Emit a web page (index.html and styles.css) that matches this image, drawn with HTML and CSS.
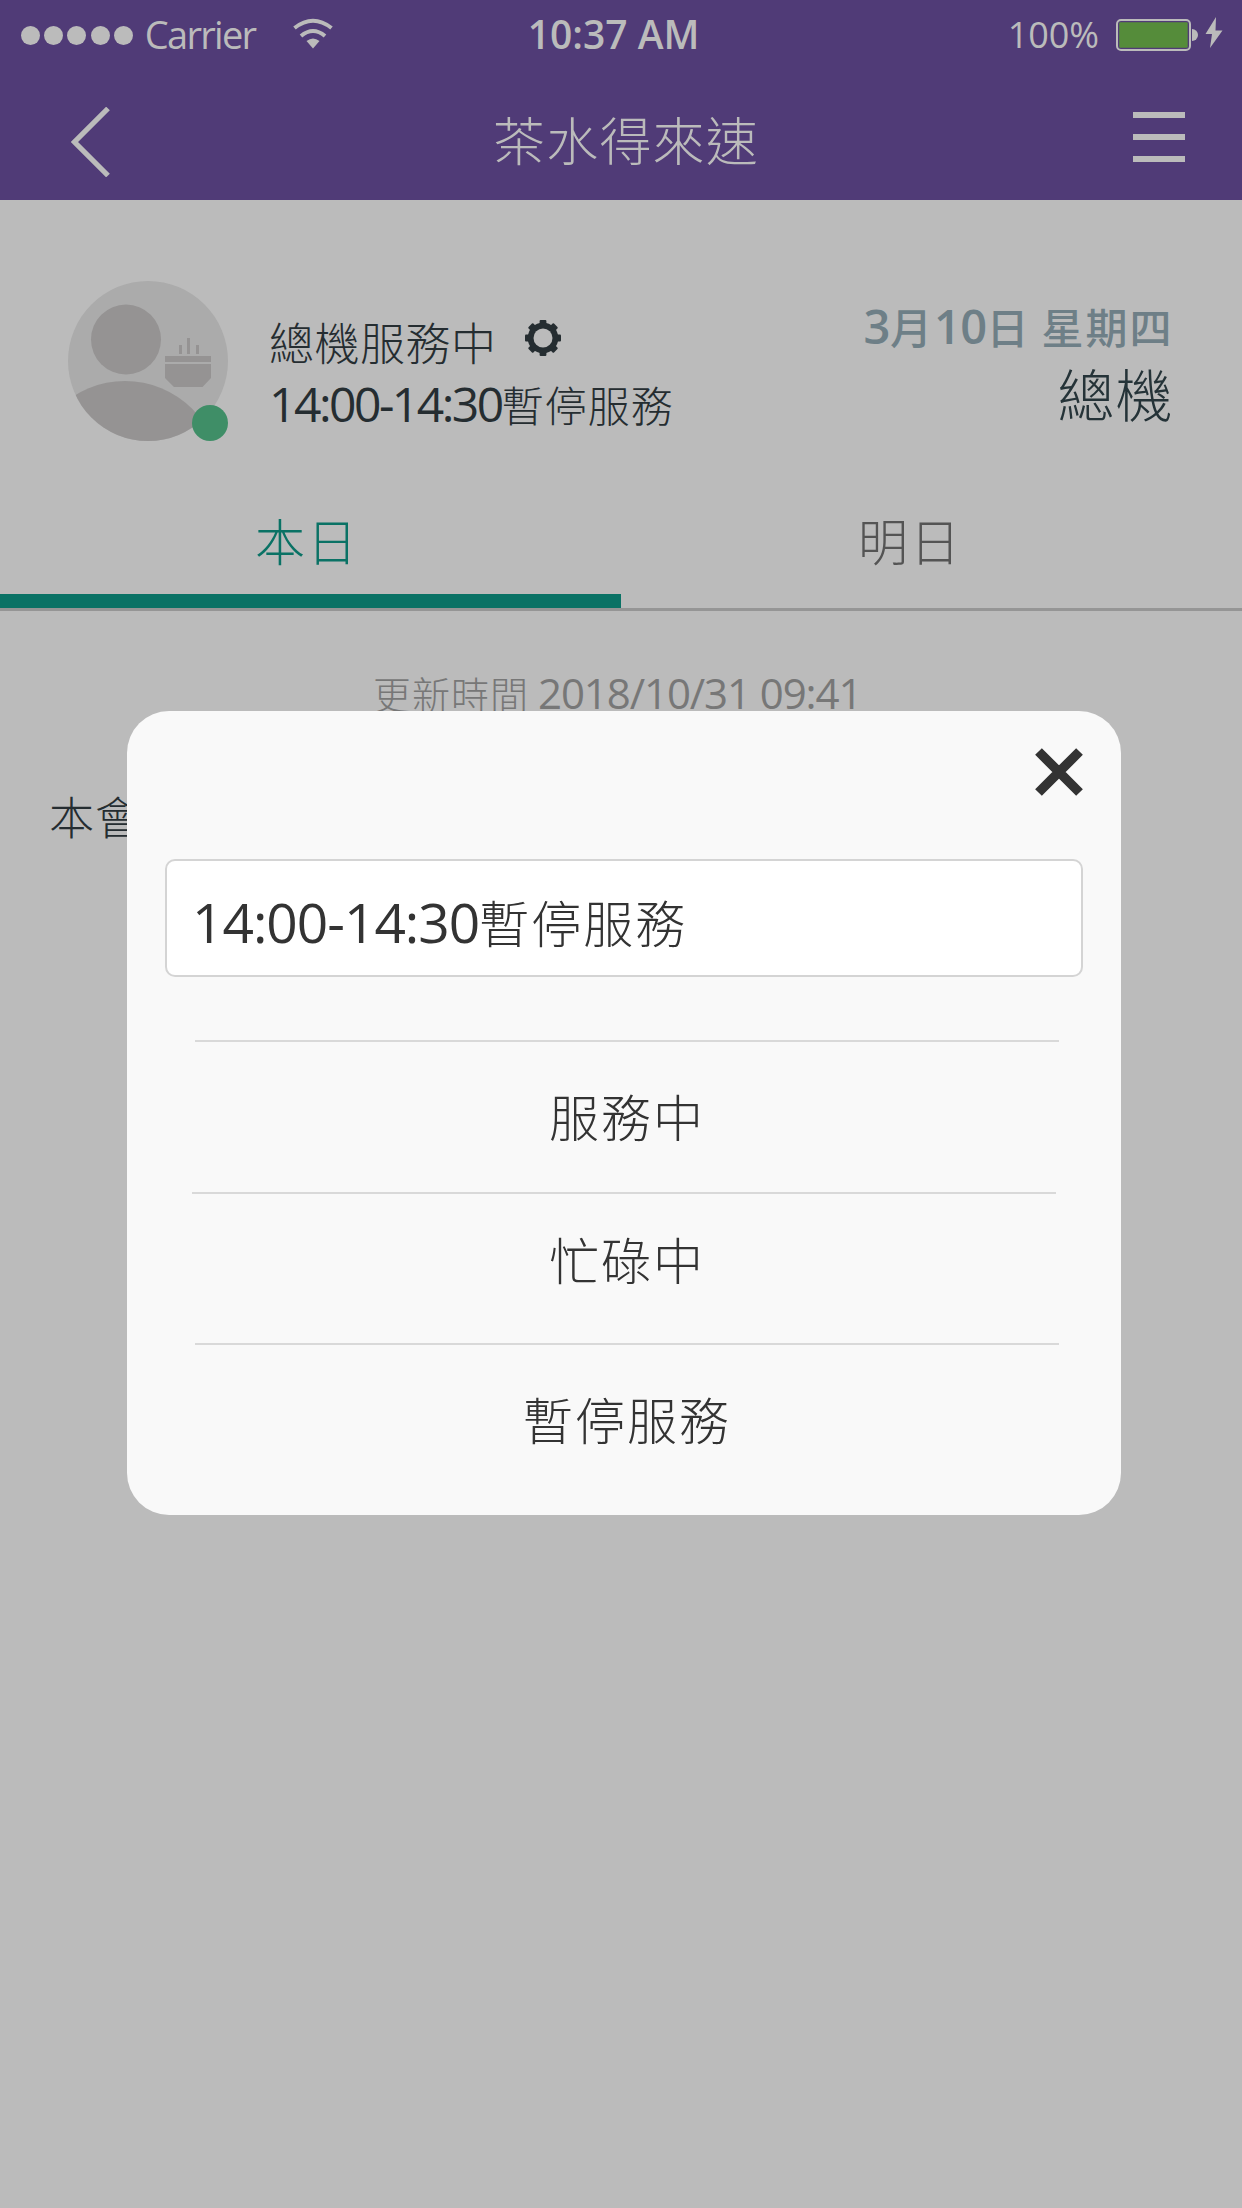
FILE: index.html
```html
<!DOCTYPE html>
<html lang="zh-Hant">
<head>
<meta charset="utf-8">
<title>茶水得來速</title>
<link rel="stylesheet" href="styles.css">
</head>
<body>
<div class="screen">
  <header class="header">
    <div class="status">
      <div class="signal"><i></i><i></i><i></i><i></i><i></i></div>
      <span class="carrier">Carrier</span>
      <svg class="wifi" width="40" height="32" viewBox="0 0 40 32"><g fill="none" stroke="#bbb" stroke-width="4"><path d="M1.500 10Q20-4.500 38.500 10"/><path d="M8 18Q20 8 32 18"/></g><path d="M13.500 23Q20 18 26.500 23L20 30.500Z" fill="#bbb"/></svg>
      <span class="time">10:37 AM</span>
      <span class="percent">100%</span>
      <svg class="battery" width="108" height="34" viewBox="0 0 108 34"><rect x="1" y="3" width="73" height="30" rx="4" fill="none" stroke="#bbb" stroke-width="2"/><rect x="3.200" y="5.300" width="68.500" height="25.500" rx="1" fill="#558c3a"/><path d="M76 12a6 6 0 0 1 0 12Z" fill="#bbb"/><path d="M100 0L89.500 17H96L94 31L106.500 13.500H99.500Z" fill="#bbb"/></svg>
    </div>
    <nav class="nav">
      <svg class="back" width="40" height="70" viewBox="0 0 40 70"><path d="M37 1.500L3.500 35L37 68.500" fill="none" stroke="#bbb" stroke-width="5.200"/></svg>
      <h1 class="title">茶水得來速</h1>
      <div class="menu"><i></i><i></i><i></i></div>
    </nav>
  </header>

  <section class="profile">
    <svg class="avatar" width="160" height="160" viewBox="0 0 160 160">
      <defs><clipPath id="face"><circle cx="80" cy="80" r="80"/></clipPath></defs>
      <circle cx="80" cy="80" r="80" fill="#ababab"/>
      <g fill="#959393">
        <circle cx="58" cy="58.500" r="35"/>
        <circle cx="57" cy="195" r="95" clip-path="url(#face)"/>
        <path d="M97 75h46v6H97zM97 83h46v14l-8.500 9H106l-9-9zM111 64h3v9h-3zM119 57h3v16h-3zM128 64h3v9h-3z"/>
      </g>
      <circle cx="142" cy="142" r="18" fill="#3f8e67"/>
    </svg>
    <div class="who">
      <div class="state">總機服務中
        <svg class="gear" width="36" height="36" viewBox="-18 -18 36 36"><g fill="#252d31"><g id="teeth"><rect x="-3.400" y="-18" width="6.800" height="36" rx="1"/><rect x="-18" y="-3.400" width="36" height="6.800" rx="1"/></g><use href="#teeth" transform="rotate(45)"/><circle r="15.300"/></g><circle r="9.500" fill="#bbb"/></svg>
      </div>
      <div class="note"><span class="num">14:00-14:30</span>暫停服務</div>
    </div>
    <div class="today">
      <div class="date"><span class="num">3</span>月<span class="num">10</span>日<span class="gap"></span>星期四</div>
      <div class="role">總機</div>
    </div>
  </section>

  <div class="tabs">
    <div class="tab active">本日</div>
    <div class="tab">明日</div>
  </div>

  <main class="content">
    <p class="updated">更新時間<span class="num">2018/10/31 09:41</span></p>
    <p class="entry">本會</p>
  </main>

  <div class="dialog">
    <div class="dialog-top"><svg class="close" width="50" height="50" viewBox="0 0 50 50"><path d="M4.500 4.500L45.500 45.500M45.500 4.500L4.500 45.500" stroke="#333" stroke-width="9.500"/></svg></div>
    <div class="field"><span class="num">14:00-14:30</span>暫停服務</div>
    <div class="options">
      <div class="option">服務中</div>
      <div class="option busy">忙碌中</div>
      <div class="option">暫停服務</div>
    </div>
  </div>
</div>
</body>
</html>
```

FILE: styles.css
```css
* { box-sizing: border-box; }
body {
  margin: 0;
  font-family: "Noto Sans CJK TC", sans-serif;
  font-weight: 300;
  color: #252d31;
}
svg { display: block; flex: none; }
.screen {
  position: relative;
  width: 1242px;
  height: 2208px;
  overflow: hidden;
  background: #bbb;
}
.header { height: 200px; background: #503b77; color: #bbb; }
.status {
  display: flex;
  align-items: flex-start;
  height: 70px;
  padding-left: 21px;
  font-family: "Open Sans", sans-serif;
  font-weight: 400;
  line-height: 40px;
  white-space: nowrap;
}
.signal { display: flex; gap: 4.200px; margin-top: 25.500px; }
.signal i { width: 19px; height: 19px; border-radius: 50%; background: #bbb; }
.carrier { width: 148px; margin: 14px 0 0 12px; font-size: 38px; letter-spacing: -1.700px; }
.wifi { margin-top: 18px; }
.time { width: 480px; margin: 14px 0 0 195px; font-size: 39px; font-weight: 600; letter-spacing: 0; }
.percent { width: 108px; margin-top: 15px; font-size: 36px; letter-spacing: -0.100px; }
.battery { margin-top: 17px; }
.nav {
  display: flex;
  justify-content: space-between;
  padding: 37px 57px 0 71px;
}
.title { margin: 0; padding: 1px 0 0 8px; font-size: 52px; font-weight: 300; line-height: 62px; letter-spacing: 1.200px; }
.menu { display: flex; flex-direction: column; gap: 16px; padding-top: 5px; }
.menu i { width: 52px; height: 6px; background: #bbb; }
.profile { display: flex; height: 300px; padding: 81px 70px 0 68px; white-space: nowrap; }
.who { padding: 31px 0 0 41px; line-height: 60px; }
.state { display: flex; gap: 28px; height: 62px; font-size: 45px; letter-spacing: 0.500px; }
.gear { margin-top: 8px; }
.num { font-family: "Open Sans", sans-serif; font-weight: 400; }
.note { font-size: 42px; letter-spacing: 1px; }
.note .num { font-size: 48px; letter-spacing: -2.500px; }
.today { margin: 0 -1.500px 0 auto; padding-top: 15px; line-height: 60px; text-align: right; }
.date { height: 66px; color: #6e7f87; font-size: 42px; font-weight: 500; letter-spacing: 2px; }
.date .num { font-size: 47px; font-weight: 600; letter-spacing: -0.600px; }
.date .gap { display: inline-block; width: 11px; }
.role { font-size: 57px; letter-spacing: 1px; color: #253338; }
.tabs { display: flex; height: 111px; border-bottom: 3px solid #959595; }
.tab {
  width: 621px;
  padding: 9px 43px 0 0;
  text-align: center;
  font-size: 50px;
  line-height: 60px;
  letter-spacing: 2px;
  color: #545454;
  border-bottom: 14px solid transparent;
}
.tab.active { padding-right: 7px; color: #0a7265; border-color: #0a7265; }
.content p { margin: 0; line-height: 60px; white-space: nowrap; }
.content .updated { padding: 52px 0 0 373px; font-size: 38px; letter-spacing: 1px; color: #777; }
.updated .num { margin-left: 9px; font-size: 42px; letter-spacing: -1.100px; }
.content .entry { padding: 63px 0 0 49px; font-size: 45px; letter-spacing: 1px; }
.dialog {
  position: absolute;
  left: 127px;
  top: 711px;
  width: 994px;
  height: 804px;
  border-radius: 42px;
  background: #f9f9f9;
  color: #333;
}
.dialog-top { display: flex; justify-content: flex-end; height: 148px; padding: 36px 37px 0 0; }
.field {
  width: 918px;
  height: 118px;
  margin-left: 38px;
  padding: 30px 0 0 25px;
  border: 2px solid #d4d4d4;
  border-radius: 10px;
  background: #fff;
  font-size: 50px;
  line-height: 60px;
  letter-spacing: 2px;
  white-space: nowrap;
}
.field .num { font-size: 55px; letter-spacing: -1px; }
.options { width: 864px; margin: 63px 0 0 68px; }
.option {
  height: 152px;
  padding-top: 43px;
  border-top: 2px solid #d9d9d9;
  text-align: center;
  font-size: 50px;
  line-height: 60px;
  letter-spacing: 2px;
}
.option.busy { height: 151px; margin-left: -3px; margin-right: 3px; padding: 34px 0 0 6px; }
```
